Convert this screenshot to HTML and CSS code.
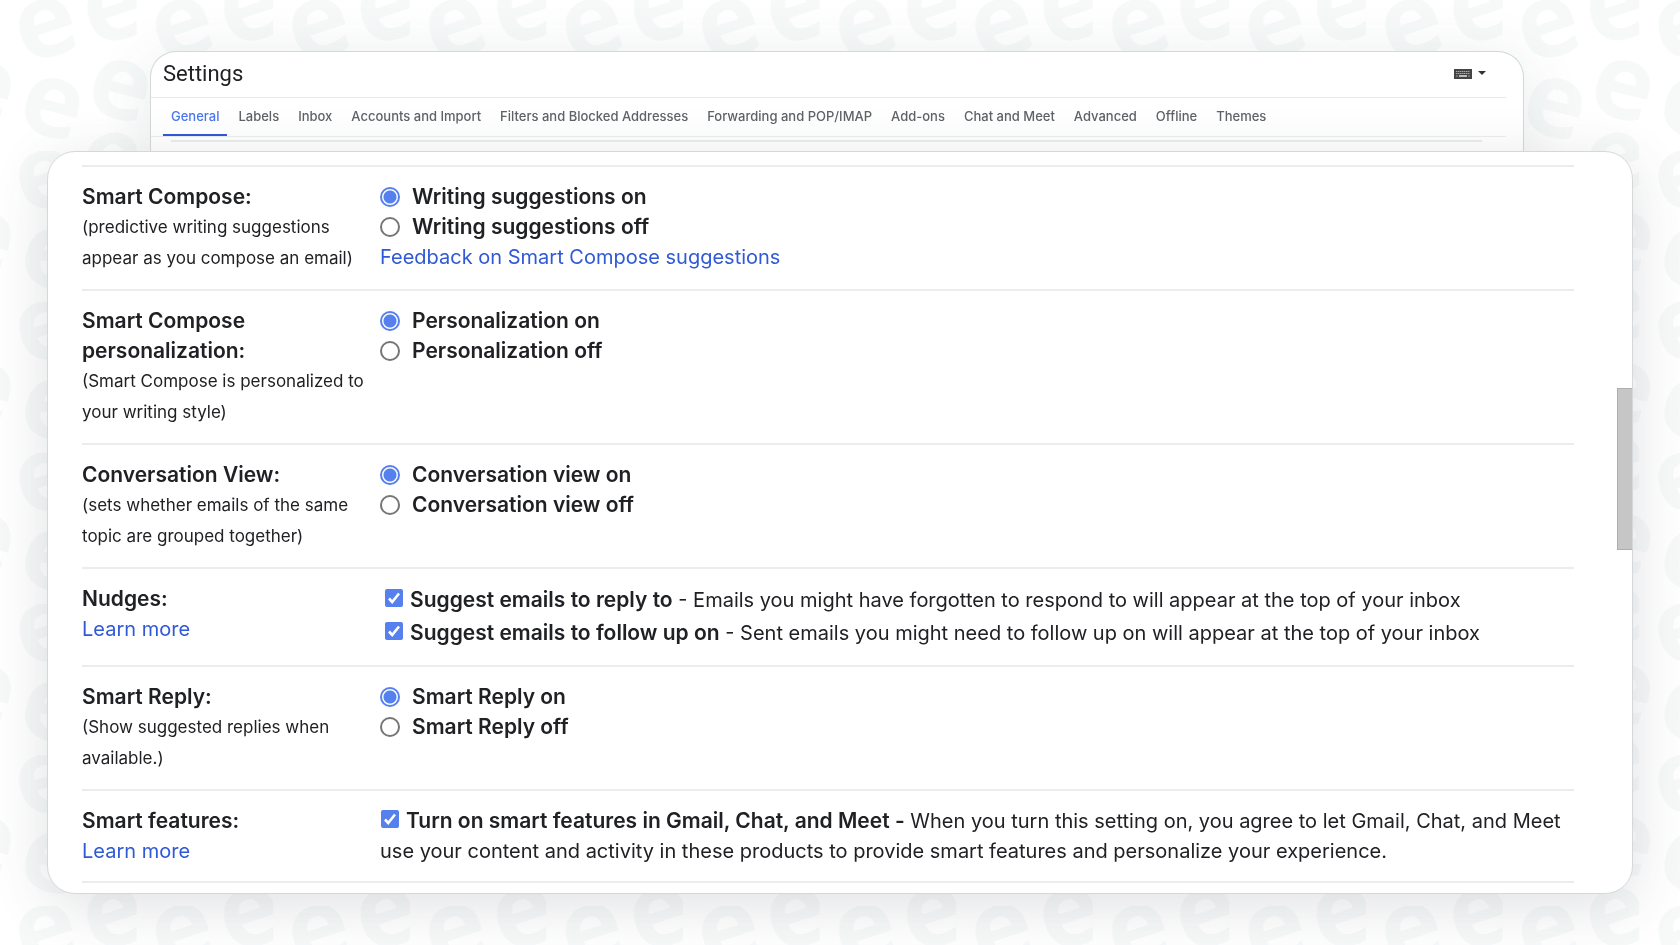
FILE: index.html
```html
<!DOCTYPE html>
<html lang="en">
<head>
    <meta charset="UTF-8">
    <meta name="viewport" content="width=device-width, initial-scale=1.0">
    <title>Settings</title>
    <link rel="stylesheet" href="styles.css">
</head>
<body>
    <svg class="backdrop" aria-hidden="true">
        <defs>
            <pattern id="letters" width="136.6" height="151" patternUnits="userSpaceOnUse">
                <g id="tile">
                    <text transform="translate(46 28) rotate(-18)" y="29">e</text>
                    <text transform="translate(114 11) rotate(-18)" y="29">e</text>
                    <text transform="translate(114 162) rotate(-18)" y="29">e</text>
                    <text transform="translate(52 107) rotate(14)" y="29">e</text>
                    <text transform="translate(120 89) rotate(14)" y="29">e</text>
                    <text transform="translate(-16.6 89) rotate(14)" y="29">e</text>
                </g>
            </pattern>
        </defs>
        <rect width="100%" height="100%" fill="url(#letters)"/>
    </svg>

    <div class="page">
        <header class="header-card">
            <div class="title-bar">
                <h1>Settings</h1>
                <button class="input-tools" aria-label="Select input tool">
                    <svg width="32" height="10" viewBox="0 0 32 10">
                        <rect width="18" height="10" fill="#444"/>
                        <path d="M2 2.5h14M2 4.5h14" stroke="#a5a5a5" stroke-dasharray="1.5 .5"/>
                        <path d="M2 7h2M14 7h2" stroke="#999"/>
                        <path d="M5 7h8" stroke="#bbb" stroke-width="2"/>
                        <path d="M24 2h8l-4 4z" fill="#333"/>
                    </svg>
                </button>
            </div>
            <nav class="tabs">
                <a href="#" class="active">General</a>
                <a href="#">Labels</a>
                <a href="#">Inbox</a>
                <a href="#">Accounts and Import</a>
                <a href="#">Filters and Blocked Addresses</a>
                <a href="#">Forwarding and POP/IMAP</a>
                <a href="#">Add-ons</a>
                <a href="#">Chat and Meet</a>
                <a href="#">Advanced</a>
                <a href="#">Offline</a>
                <a href="#">Themes</a>
            </nav>
            <div class="list-start"></div>
        </header>

        <main class="settings-card">
            <section class="row">
                <div>
                    <h2>Smart Compose:</h2>
                    <p class="hint">(predictive writing suggestions appear as you compose an email)</p>
                </div>
                <div>
                    <label class="option"><input type="radio" name="compose" checked> Writing suggestions on</label>
                    <label class="option"><input type="radio" name="compose"> Writing suggestions off</label>
                    <a href="#">Feedback on Smart Compose suggestions</a>
                </div>
            </section>

            <section class="row">
                <div>
                    <h2>Smart Compose personalization:</h2>
                    <p class="hint">(Smart Compose is personalized to your writing style)</p>
                </div>
                <div>
                    <label class="option"><input type="radio" name="personalization" checked> Personalization on</label>
                    <label class="option"><input type="radio" name="personalization"> Personalization off</label>
                </div>
            </section>

            <section class="row">
                <div>
                    <h2>Conversation View:</h2>
                    <p class="hint">(sets whether emails of the same topic are grouped together)</p>
                </div>
                <div>
                    <label class="option"><input type="radio" name="conversation" checked> Conversation view on</label>
                    <label class="option"><input type="radio" name="conversation"> Conversation view off</label>
                </div>
            </section>

            <section class="row">
                <div>
                    <h2>Nudges:</h2>
                    <a href="#">Learn more</a>
                </div>
                <div class="nudges">
                    <label><input type="checkbox" checked><b>Suggest emails to reply to</b> - Emails you might have forgotten to respond to will appear at the top of your inbox</label>
                    <label><input type="checkbox" checked><b>Suggest emails to follow up on</b> - Sent emails you might need to follow up on will appear at the top of your inbox</label>
                </div>
            </section>

            <section class="row">
                <div>
                    <h2>Smart Reply:</h2>
                    <p class="hint">(Show suggested replies when available.)</p>
                </div>
                <div>
                    <label class="option"><input type="radio" name="reply" checked> Smart Reply on</label>
                    <label class="option"><input type="radio" name="reply"> Smart Reply off</label>
                </div>
            </section>

            <section class="row">
                <div>
                    <h2>Smart features:</h2>
                    <a href="#">Learn more</a>
                </div>
                <div>
                    <label><input type="checkbox" checked><b>Turn on smart features in Gmail, Chat, and Meet -</b> When you turn this setting on, you agree to let Gmail, Chat, and Meet use your content and activity in these products to provide smart features and personalize your experience.</label>
                </div>
            </section>
            <div class="scroll-thumb"></div>
        </main>
    </div>
</body>
</html>
```
FILE: styles.css
```css
* {
    box-sizing: border-box;
}
body {
    margin: 0;
    background: #fff;
    color: #202124;
    font-family: Inter, "Liberation Sans", sans-serif;
    font-size: 20px;
    line-height: 30px;
}
h1, h2, p {
    margin: 0;
}
a {
    color: #3059d6;
    text-decoration: none;
}

/* background letters */
.backdrop {
    position: fixed;
    inset: 0;
    width: 100%;
    height: 100%;
    z-index: -1;
}
.backdrop text {
    font-family: "Open Sans", sans-serif;
    font-size: 104px;
    font-weight: 700;
    text-anchor: middle;
    fill: #f7f9f9;
}

.page {
    padding: 51px 47px;
}

/* back card */
.header-card {
    margin: 0 109px 0 103px;
    height: 100px;
    padding: 0 17px 0 0;
    border: 1px solid #d5d7d8;
    border-bottom: none;
    border-radius: 26px 26px 0 0;
    background: #fff;
    box-shadow: 0 10px 60px rgba(60, 70, 80, 0.12);
}
.title-bar {
    display: flex;
    justify-content: space-between;
    align-items: center;
    height: 46px;
    padding: 0 20px 2px 12px;
    border-bottom: 1px solid #e9eaea;
}
h1 {
    font-family: Roboto, sans-serif;
    font-size: 22px;
    font-weight: 400;
}
.input-tools {
    display: flex;
    padding: 0;
    border: none;
    background: none;
    cursor: pointer;
}
.tabs {
    display: flex;
    gap: 3px;
    height: 39px;
    padding-left: 12px;
    border-bottom: 1px solid #eceeee;
    font-size: 13px;
    font-weight: 500;
    line-height: 36px;
    white-space: nowrap;
}
.tabs a {
    padding: 0 8px;
    color: #5f6368;
}
.tabs .active {
    color: #4a78ec;
    box-shadow: inset 0 -2px #3059d6;
}
.list-start {
    margin: 3px 24px 0 20px;
    border-top: 2px solid #eceeee;
}

/* front card */
.settings-card {
    position: relative;
    padding: 13px 58px 10px 34px;
    border: 1px solid #d5d7d8;
    border-radius: 28px;
    background: #fff;
    box-shadow: 0 12px 56px rgba(60, 70, 80, 0.16);
}
.row {
    display: grid;
    grid-template-columns: 290px 1fr;
    column-gap: 8px;
    padding: 15px 0;
    border-top: 2px solid #ececec;
}
.row:last-of-type {
    border-bottom: 2px solid #ececec;
}
h2, b, .option {
    font-size: 21px;
    font-weight: 600;
}
b {
    line-height: 24px;
}
.hint {
    font-size: 17px;
    line-height: 31px;
}
.option {
    display: flex;
    align-items: center;
    gap: 12px;
}
.nudges {
    padding-left: 4px;
    line-height: 33px;
}
.nudges label {
    display: block;
}

input {
    appearance: none;
    margin: 0;
}
input[type="radio"] {
    width: 20px;
    height: 20px;
    border: 2px solid #767676;
    border-radius: 50%;
    background: #fff;
}
input[type="radio"]:checked {
    border-color: #5580ee;
    background: radial-gradient(circle, #5580ee 6px, #fff 7px);
}
input[type="checkbox"] {
    width: 18px;
    height: 18px;
    margin: 0 7px 0 1px;
    border-radius: 2px;
    background: #5580ee url("data:image/svg+xml,%3Csvg xmlns='http://www.w3.org/2000/svg' viewBox='0 0 18 18'%3E%3Cpath d='M4 9.5l3.2 3.5L14 4.5' fill='none' stroke='white' stroke-width='2.6'/%3E%3C/svg%3E");
}

.scroll-thumb {
    position: absolute;
    top: 236px;
    right: 0;
    width: 15px;
    height: 162px;
    border: 1px solid #aeaeae;
    border-right: none;
    background: #c6c6c6;
}
```
